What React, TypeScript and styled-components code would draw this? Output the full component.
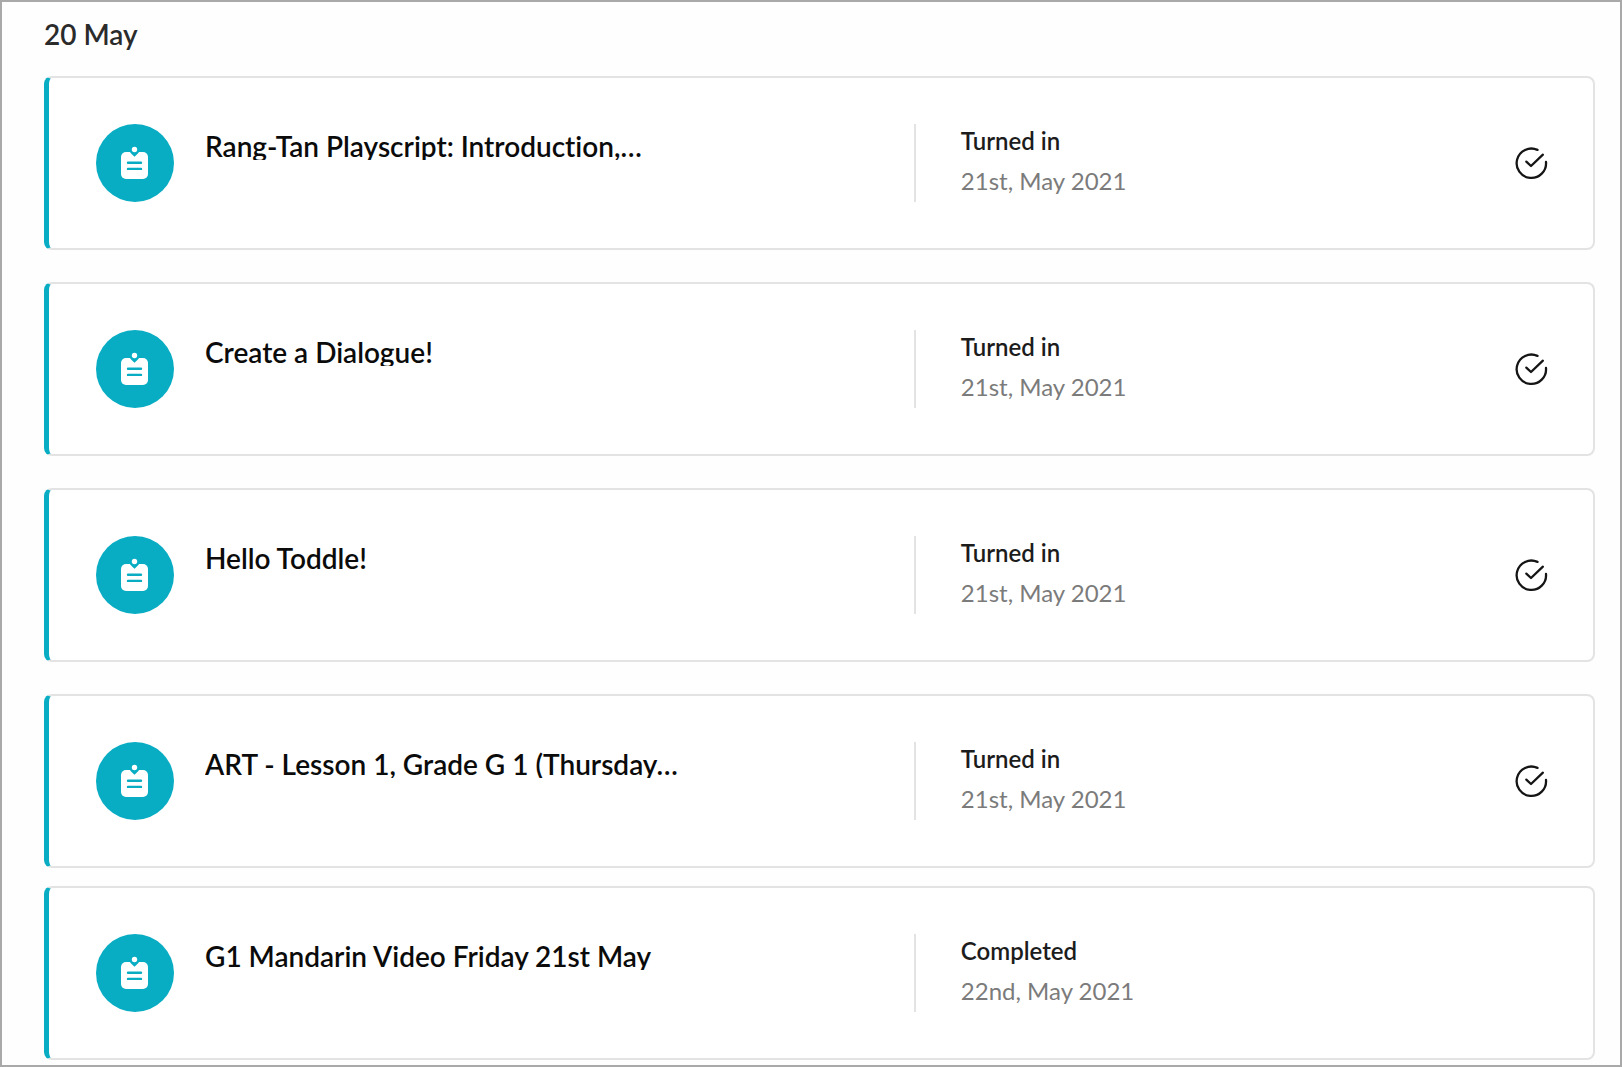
import React from "react";
import styled, { createGlobalStyle } from "styled-components";

const GlobalStyle = createGlobalStyle`
  *, *::before, *::after { box-sizing: border-box; }
  body {
    margin: 0;
    background: #fff;
    font-family: Lato, "Open Sans", "Liberation Sans", sans-serif;
    font-variant-ligatures: none;
  }
`;

const Page = styled.main`
  min-height: 100vh;
  padding: 13px 25px 4px 42px;
  border: 2px solid #a9a9a9;
  background: #fefefe;
`;

const DayHeading = styled.h1`
  margin: 0 0 23px;
  font-size: 28px;
  line-height: 38px;
  font-weight: 600;
  color: #2b2b2b;
`;

const List = styled.ul`
  display: flex;
  flex-direction: column;
  gap: 32px;
  margin: 0 0 18px;
  padding: 0;
  list-style: none;

  &:last-child {
    margin-bottom: 0;
  }
`;

const Card = styled.li`
  display: grid;
  grid-template-columns: 78px minmax(0, 7fr) minmax(0, 6fr);
  align-items: center;
  padding: 46px 45px 46px 47px;
  border: 2px solid #e3e3e3;
  border-left: 5px solid #08adc4;
  border-radius: 8px;
  background: #fff;
`;

const Badge = styled.svg`
  display: block;
  width: 78px;
  height: 78px;
`;

const TitleColumn = styled.div`
  align-self: stretch;
  padding: 8px 0 0 31px;
`;

const Title = styled.h2`
  margin: 0;
  overflow: hidden;
  white-space: nowrap;
  font-size: 28px;
  line-height: 28px;
  font-weight: 600;
  color: #0b0b0b;
`;

const StatusColumn = styled.div`
  display: flex;
  align-items: center;
  justify-content: space-between;
  height: 78px;
  padding-left: 45px;
  border-left: 2px solid #e3e3e3;
`;

const StatusText = styled.div`
  margin-bottom: 4px;
  font-size: 24px;
  line-height: 40px;
`;

const Status = styled.div`
  font-weight: 600;
  color: #1c1c1c;
`;

const DateText = styled.div`
  color: #7b7b7b;
`;

const Check = styled.svg`
  flex: none;
  width: 34px;
  height: 34px;
`;

type Item = { title: string; status: string; date: string; turnedIn: boolean };

const turnedIn = (title: string): Item => ({
  title,
  status: "Turned in",
  date: "21st, May 2021",
  turnedIn: true,
});

const submitted: Item[] = [
  turnedIn("Rang-Tan Playscript: Introduction,…"),
  turnedIn("Create a Dialogue!"),
  turnedIn("Hello Toddle!"),
  turnedIn("ART - Lesson 1, Grade G 1 (Thursday…"),
];

const completed: Item[] = [
  {
    title: "G1 Mandarin Video Friday 21st May",
    status: "Completed",
    date: "22nd, May 2021",
    turnedIn: false,
  },
];

function NoteBadge() {
  return (
    <Badge viewBox="0 0 78 78" aria-hidden="true">
      <circle cx="39" cy="39" r="39" fill="#08adc4" />
      <rect x="25" y="28" width="27" height="27" rx="5" fill="#fff" />
      <path d="M33.8 27.2h9.4c0 1.8-2.6 3.2-4.7 5.6-2.1-2.4-4.7-3.8-4.7-5.6z" fill="#08adc4" />
      <circle cx="38.5" cy="25.5" r="2.7" fill="#fff" />
      <path d="M32 38.8h13M32 44.9h13" stroke="#08adc4" strokeWidth="2.4" strokeLinecap="round" />
    </Badge>
  );
}

function TurnedInCheck() {
  return (
    <Check viewBox="0 0 34 34" fill="none" stroke="#151515" strokeWidth="2.3" strokeLinecap="round" strokeLinejoin="round" role="img" aria-label="Turned in">
      <path d="M23.5 3.9A14.7 14.7 0 1 0 32 16" />
      <path d="M12.3 15.6l4.7 4.4L28.9 8.7" />
    </Check>
  );
}

function Assignment({ item }: { item: Item }) {
  return (
    <Card>
      <NoteBadge />
      <TitleColumn>
        <Title>{item.title}</Title>
      </TitleColumn>
      <StatusColumn>
        <StatusText>
          <Status>{item.status}</Status>
          <DateText>{item.date}</DateText>
        </StatusText>
        {item.turnedIn && <TurnedInCheck />}
      </StatusColumn>
    </Card>
  );
}

export default function App() {
  return (
    <>
      <GlobalStyle />
      <Page>
        <DayHeading>20 May</DayHeading>
        {[submitted, completed].map((group, i) => (
          <List key={i}>
            {group.map((item) => (
              <Assignment key={item.title} item={item} />
            ))}
          </List>
        ))}
      </Page>
    </>
  );
}
